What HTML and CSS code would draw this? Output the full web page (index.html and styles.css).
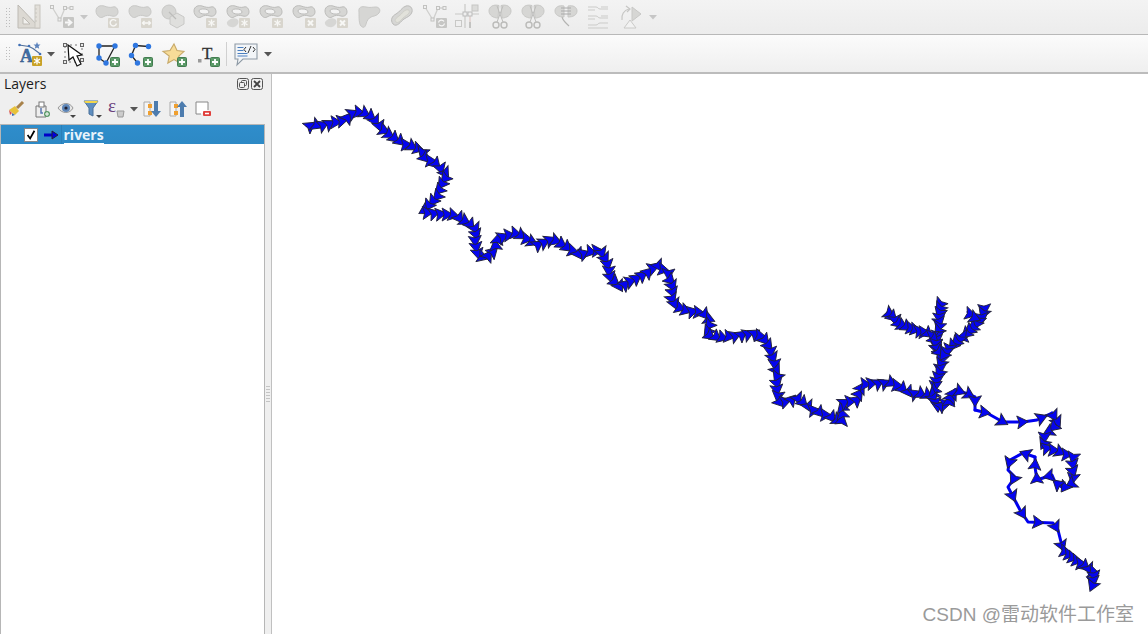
FILE: index.html
```html
<!DOCTYPE html>
<html lang="en">
<head>
<meta charset="utf-8">
<title>QGIS rivers</title>
<link rel="stylesheet" href="styles.css">
</head>
<body>
<svg class="defs" width="0" height="0" aria-hidden="true">
  <defs>
    <symbol id="blob" viewBox="0 0 24 26"><path d="M1 7C1 2 6 1 9 2s6 2 9 1 5 2 5 5-3 5-6 4-6-1-9 1-7-2-7-6z" fill="#d6d6d4" stroke="#c8c8c6"/></symbol>
    <symbol id="ring" viewBox="0 0 24 26"><path d="M1 7C1 2 6 1 9 2s6 2 9 1 5 2 5 5-3 5-6 4-6-1-9 1-7-2-7-6z" fill="#d6d6d4" stroke="#bcbcba"/><path d="M6 7c0-2 3-2 5-2s5 1 5 3-3 2-5 2-5-1-5-3z" fill="#f3f3f3" stroke="#bcbcba"/></symbol>
    <symbol id="lobe" viewBox="0 0 24 26"><path d="M1 18c2-3 7-5 10-3s1 7-3 8-8-2-7-5z" fill="#d6d6d4"/></symbol>
    <symbol id="badge-gear" viewBox="0 0 24 26"><rect x="13" y="14" width="11" height="10" rx="1" fill="#d8d5cd"/><path d="M18.500 15.500v7M15.500 17l6 4M21.500 17l-6 4" stroke="#f7f7f5" stroke-width="1.300"/></symbol>
    <symbol id="badge-x" viewBox="0 0 24 26"><rect x="13" y="14" width="11" height="10" rx="1" fill="#d8d5cd"/><path d="M16 16.500l5 5M21 16.500l-5 5" stroke="#f7f7f5" stroke-width="2"/></symbol>
    <symbol id="nodes" viewBox="0 0 24 26"><path d="M2 3l8 13 5-12h7" fill="none" stroke="#d0d0ce" stroke-width="1.300"/><g fill="#efefef" stroke="#c2c2c0"><rect x=".5" y="1.500" width="3" height="3"/><rect x="13.500" y="2.500" width="3" height="3"/><rect x="20" y="2.500" width="3" height="3"/><rect x="8" y="14" width="3" height="3"/></g></symbol>
    <symbol id="scissor" viewBox="0 0 24 26"><path d="M11 1.500C5 0 1 3 1 7s4 7 9 7zM13 1.500C19 0 23 3 23 7s-4 7-9 7z" fill="#d6d6d4" stroke="#c8c8c6"/><path d="M9 2l6 16M15 2L9 18" stroke="#bdbdbb"/><circle cx="8" cy="21" r="3" fill="none" stroke="#bbbbb9" stroke-width="1.400"/><circle cx="16" cy="21" r="3" fill="none" stroke="#bbbbb9" stroke-width="1.400"/></symbol>
    <symbol id="plus" viewBox="0 0 10 10"><rect x=".5" y=".5" width="9" height="9" rx="1" fill="#5b9a68" stroke="#437d50"/><path d="M5 2v6M2 5h6" stroke="#fff" stroke-width="1.800"/></symbol>
    <symbol id="caret" viewBox="0 0 10 6"><path d="M1 1h8L5 5.500z"/></symbol>
  </defs>
</svg>

<div class="toolbar toolbar-top">
  <span class="grip grip-top"></span>
  <span class="btn btn-ruler"><svg viewBox="0 0 24 26"><path d="M1 1v23h22z" fill="#dcd9d3" stroke="#bdbab4"/><path d="M6 13v7h7z" fill="#f1f0ed" stroke="#bdbab4"/><rect x="18" y="1" width="5" height="23" fill="#e3e0da" stroke="#c8c5bf"/><path d="M18 5h2M18 9h2M18 13h2M18 17h2" stroke="#c8c5bf"/></svg></span>
  <span class="btn btn-tight"><svg viewBox="0 0 24 26"><use href="#nodes"/><rect x="13" y="13" width="11" height="11" rx="1" fill="#c6c6c4"/><path d="M15 18.500h5M18 15.500l3.500 3-3.500 3" fill="none" stroke="#f7f7f7" stroke-width="1.800"/></svg></span>
  <span class="caret-btn caret-gap"><svg class="caret caret-off"><use href="#caret"/></svg></span>
  <span class="btn"><svg viewBox="0 0 24 26"><use href="#blob"/><rect x="13" y="14" width="11" height="10" rx="1" fill="#d8d5cd"/><path d="M21 17a3.200 3.200 0 1 0 .5 2.500" fill="none" stroke="#f7f7f5" stroke-width="1.400"/></svg></span>
  <span class="btn"><svg viewBox="0 0 24 26"><use href="#blob"/><rect x="13" y="14" width="11" height="10" rx="1" fill="#d8d5cd"/><path d="M14.500 19h8M16.500 17l-2 2 2 2M20.500 17l2 2-2 2" fill="none" stroke="#f7f7f5" stroke-width="1.300"/></svg></span>
  <span class="btn"><svg viewBox="0 0 24 26"><circle cx="8" cy="8" r="7" fill="#d6d6d4" stroke="#c8c8c6"/><path d="M16 9l7 4v7l-7 4-7-4v-7z" fill="#dfdfdd" stroke="#c8c8c6"/><path d="M8 8l7 7" stroke="#bcbcba" stroke-width="1.200"/></svg></span>
  <span class="btn"><svg viewBox="0 0 24 26"><use href="#ring"/><use href="#badge-gear"/></svg></span>
  <span class="btn"><svg viewBox="0 0 24 26"><use href="#ring"/><use href="#lobe"/><use href="#badge-gear"/></svg></span>
  <span class="btn"><svg viewBox="0 0 24 26"><use href="#ring"/><use href="#badge-gear"/></svg></span>
  <span class="btn"><svg viewBox="0 0 24 26"><use href="#ring"/><use href="#badge-x"/></svg></span>
  <span class="btn"><svg viewBox="0 0 24 26"><use href="#ring"/><use href="#lobe"/><use href="#badge-x"/></svg></span>
  <span class="btn"><svg viewBox="0 0 24 26"><path d="M2 8C1 3 5 2 9 3s7 0 10 0 5 3 3 6-6 3-8 4-4 3-5 7-3 4-5 2-2-8-2-14z" fill="#d6d6d4" stroke="#c8c8c6"/></svg></span>
  <span class="btn"><svg viewBox="0 0 24 26"><path d="M3 20C0 16 2 12 6 10s6-7 10-8 7 2 6 6-5 5-8 7-7 9-11 5z" fill="#d6d6d4" stroke="#bcbcba"/><path d="M6 18c-2-2 0-4 3-6s4-5 7-6 4 1 3 3-4 3-6 5-5 6-7 4z" fill="#e2e2db" stroke="#cfcfc8"/></svg></span>
  <span class="btn"><svg viewBox="0 0 24 26"><use href="#nodes"/><rect x="13" y="14" width="11" height="10" rx="1" fill="#c6c6c4"/><path d="M15.500 18.500a3 3 0 0 1 5.500-1M21.500 19.500a3 3 0 0 1-5.500 1" fill="none" stroke="#f7f7f7" stroke-width="1.300"/></svg></span>
  <span class="btn"><svg viewBox="0 0 24 26"><path d="M10 0v24M0 10h24" stroke="#c8c8c6" stroke-width="1.200"/><path d="M15 10v8" stroke="#dcc8c4" stroke-width="1.200"/><path d="M15 18v6" stroke="#b4b4b2" stroke-width="1.500"/><rect x="17" y="1" width="6" height="6" fill="#dcdcda" stroke="#c6c6c4"/><rect x="8" y="8" width="4" height="4" fill="#efefef" stroke="#bbb"/><rect x="13" y="8" width="4" height="4" fill="#efefef" stroke="#bbb"/><rect x=".5" y="16.500" width="6" height="6" fill="#efefef" stroke="#c8c8c6"/></svg></span>
  <span class="btn"><svg viewBox="0 0 24 26"><use href="#scissor"/></svg></span>
  <span class="btn"><svg viewBox="0 0 24 26"><use href="#scissor"/></svg></span>
  <span class="btn"><svg viewBox="0 0 24 26"><path d="M10 2C5 1 1 3 1 7s4 6 9 6zM14 2c5-1 9 1 9 5s-4 6-9 6z" fill="#d6d6d4" stroke="#c8c8c6"/><path d="M7 4h10M7 7h10M7 10h10" stroke="#aaa"/><path d="M8 13c1 4 4 6 7 9" fill="none" stroke="#b4b4b2" stroke-width="1.100"/></svg></span>
  <span class="btn"><svg viewBox="0 0 24 26"><path d="M2 3h8c2 0 2 2 4 2h8M2 6h7M15 3h7M2 12h8c2 0 2 2 4 2h8M2 15h7M15 12h7M2 21h8c2 0 2-2 4-2h8M2 24h20" fill="none" stroke="#cbcbc9" stroke-width="1"/></svg></span>
  <span class="btn btn-tight"><svg viewBox="0 0 24 26"><path d="M10 5C5 6 2 11 3 16" fill="none" stroke="#c6c6c4" stroke-width="1.200"/><path d="M7 2l4 3-3 3" fill="none" stroke="#c6c6c4" stroke-width="1.200"/><path d="M13 3l9 7-9 7z" fill="#d6d6d4" stroke="#c8c8c6"/><path d="M11 16l-6 8h12z" fill="#f2f2f2" stroke="#cacac8"/></svg></span>
  <span class="caret-btn"><svg class="caret caret-off"><use href="#caret"/></svg></span>
</div>

<div class="toolbar toolbar-second">
  <span class="grip grip-short"></span>
  <span class="btn btn-tight"><svg viewBox="0 0 24 26"><path d="M1 4l10 1.500 4 2 8 6" fill="none" stroke="#4e6e9a" stroke-width="1.100"/><circle cx="1.500" cy="4" r="1.300" fill="#3f6fb5"/><circle cx="11" cy="5" r="1.300" fill="#3f6fb5"/><circle cx="22" cy="13" r="1.300" fill="#3f6fb5"/><path d="M19 1l1 2.400 2.500.2-1.900 1.700.6 2.500-2.200-1.400-2.200 1.400.6-2.500-1.900-1.700 2.500-.2z" fill="#5c83bd"/><text class="label-a" x="2" y="21">A</text><rect x="14" y="15" width="10" height="10" rx="1" fill="#c9a227"/><path d="M19 16.500v7M16 18l6 4M22 18l-6 4" stroke="#fff" stroke-width="1.300"/></svg></span>
  <span class="caret-btn caret-tight"><svg class="caret"><use href="#caret"/></svg></span>
  <span class="btn btn-draw"><svg viewBox="0 0 24 26"><rect x="3" y="4" width="17" height="17" fill="none" stroke="#777" stroke-dasharray="2 3"/><g fill="#e8e8e8" stroke="#666"><rect x="1.500" y="2.500" width="3" height="3"/><rect x="18.500" y="2.500" width="3" height="3"/><rect x="1.500" y="19.500" width="3" height="3"/><rect x="18.500" y="17.500" width="3" height="3"/></g><path d="M6 4l1 15 4-3 4 9 4-2-4-8 5-1z" fill="#fff" stroke="#111" stroke-width="1.200"/></svg></span>
  <span class="btn btn-draw"><svg viewBox="0 0 24 26"><path d="M3 5l16 0-9 17-7-5z" fill="none" stroke="#222" stroke-width="1.300"/><g fill="#2f77e0"><circle cx="3" cy="5" r="2.700"/><circle cx="19" cy="5" r="2.700"/><circle cx="10" cy="22" r="2.700"/><circle cx="3" cy="17" r="2.700"/></g><use href="#plus" x="14" y="16" width="10" height="10"/></svg></span>
  <span class="btn btn-draw"><svg viewBox="0 0 24 26"><path d="M19.500 5.500l-13-1-4 10 6 7.500" fill="none" stroke="#222" stroke-width="1.300"/><g fill="#2f77e0"><circle cx="6.500" cy="4.500" r="2.700"/><circle cx="19.500" cy="5.500" r="2.700"/><circle cx="2.500" cy="14.500" r="2.700"/><circle cx="8.500" cy="22" r="2.700"/></g><use href="#plus" x="14" y="16" width="10" height="10"/></svg></span>
  <span class="btn btn-draw"><svg viewBox="0 0 24 26"><path d="M11 3l3 6.500 7 .9-5.200 4.700 1.400 7-6.200-3.500-6.200 3.500 1.400-7L0 10.400l7-.9z" fill="#f7dc98" stroke="#c6a868" stroke-width="1.100"/><use href="#plus" x="14" y="16" width="10" height="10"/></svg></span>
  <span class="btn btn-last"><svg viewBox="0 0 24 26"><text class="label-t" x="6" y="18">T</text><rect x="2" y="18" width="3.500" height="3.500" fill="#9a9a9a"/><use href="#plus" x="14" y="16" width="10" height="10"/></svg></span>
  <span class="sep"></span>
  <span class="btn btn-tight"><svg viewBox="0 0 24 26"><path d="M1 3h22v15H9l-6 6 1-6H1z" fill="#f2f5f8" stroke="#8e9aa5" stroke-width="1.100"/><path d="M3.500 6.500h6M3.500 9.500h6M3.500 12.500h10M3.500 15h10" stroke="#4a7fc0" stroke-width="1.200"/><path d="M12 6l-2 2.500 2 2.500M19 6l2 2.500-2 2.500M17 5l-3 7" fill="none" stroke="#333" stroke-width="1"/></svg></span>
  <span class="caret-btn"><svg class="caret"><use href="#caret"/></svg></span>
</div>

<div class="workspace">
  <aside class="panel">
    <div class="panel-title">
      <span class="panel-name">Layers</span>
      <span class="title-btns">
        <svg class="title-btn" viewBox="0 0 12 12"><rect x=".5" y=".5" width="11" height="11" rx="2" fill="none" stroke="#555"/><rect x="4.500" y="2.500" width="5" height="5" rx="1" fill="none" stroke="#555"/><rect x="2.500" y="4.500" width="5" height="5" rx="1" fill="#efefef" stroke="#555"/></svg>
        <svg class="title-btn" viewBox="0 0 12 12"><rect x=".5" y=".5" width="11" height="11" rx="2" fill="none" stroke="#555"/><path d="M3 3l6 6M9 3l-6 6" stroke="#444" stroke-width="1.800"/></svg>
      </span>
    </div>
    <div class="panel-tools">
      <span class="tool"><svg viewBox="0 0 20 20"><path d="M3 11l6-4 4 5-4 4z" fill="#e7c23a"/><path d="M3 11l3 3-2 2z" fill="#d9534f"/><path d="M6 14l3 2-3 1z" fill="#3f6fb5"/><path d="M11 9l6-6" stroke="#a8824a" stroke-width="3"/></svg></span>
      <span class="tool"><svg viewBox="0 0 20 20"><path d="M4 7h10v11H4z" fill="#eee" stroke="#777"/><rect x="7" y="3" width="5" height="5" fill="#fff" stroke="#777"/><path d="M9 9v5h2" fill="none" stroke="#5a78b0" stroke-width="1.500"/><rect x="12" y="12" width="6" height="6" rx="3" fill="#5b9a68"/><path d="M15 13v4M13 15h4" stroke="#fff"/></svg></span>
      <span class="tool"><svg viewBox="0 0 20 20"><path d="M1 9c4-6 12-6 15 0-3 6-11 6-15 0z" fill="#e6e6e6" stroke="#999"/><circle cx="9" cy="9" r="4" fill="#5e86b8"/><circle cx="9" cy="9" r="1.600" fill="#223"/><path d="M13 16h6l-3 3z" fill="#444"/></svg></span>
      <span class="tool"><svg viewBox="0 0 20 20"><path d="M1 2h14l-5 7v8l-4-2V9z" fill="#5e8ec0" stroke="#4a7099"/><path d="M1 2h14l-1.500 2h-11z" fill="#f2d64b"/><path d="M13 16h6l-3 3z" fill="#444"/></svg></span>
      <span class="tool tool-expr"><svg viewBox="0 0 20 20"><text class="label-e" x="1" y="13">ε</text><path d="M10 12h7l-1 6h-5z" fill="#ccc" stroke="#999"/></svg></span>
      <span class="caret-btn caret-small"><svg class="caret"><use href="#caret"/></svg></span>
      <span class="tool"><svg viewBox="0 0 20 20"><path d="M2 3h6v14H2z" fill="#f5f5f5" stroke="#aaa"/><rect x="6" y="5" width="4" height="4" fill="#f0a030"/><rect x="6" y="12" width="4" height="4" fill="#f0a030"/><path d="M14 2v12" stroke="#4d7cae" stroke-width="4"/><path d="M9 12h10l-5 6z" fill="#4d7cae"/></svg></span>
      <span class="tool"><svg viewBox="0 0 20 20"><path d="M2 3h6v14H2z" fill="#f5f5f5" stroke="#aaa"/><rect x="6" y="5" width="4" height="4" fill="#f0a030"/><rect x="6" y="12" width="4" height="4" fill="#f0a030"/><path d="M14 18V7" stroke="#4d7cae" stroke-width="4"/><path d="M9 8h10l-5-6z" fill="#4d7cae"/></svg></span>
      <span class="tool"><svg viewBox="0 0 20 20"><path d="M8 15H3V3h12v8" fill="#fff" stroke="#888"/><rect x="10" y="12" width="8" height="5" rx="1" fill="#e0403c"/><path d="M12 14.500h4" stroke="#fff" stroke-width="1.500"/></svg></span>
    </div>
    <div class="tree">
      <div class="tree-row">
        <span class="check"><svg viewBox="0 0 14 14"><path d="M3 7l3 4 5-9" fill="none" stroke="#000" stroke-width="2"/></svg></span>
        <svg class="legend" viewBox="0 0 16 10"><path d="M1 5h9" stroke="#0000c8" stroke-width="3"/><path d="M9 1l6 4-6 4z" fill="#0000e0" stroke="#223"/></svg>
        <span class="row-rule"></span>
        <span class="layer-name">rivers</span>
      </div>
    </div>
  </aside>
  <div class="splitter"><span class="split-dots"></span></div>
  <main class="canvas">
    <svg id="map" class="map" viewBox="272 74 876 560"></svg>
    <div class="watermark">CSDN @雷动软件工作室</div>
  </main>
</div>
<script src="script.js"></script>
</body>
</html>
```
FILE: styles.css
```css
* { box-sizing: border-box; }
html, body { margin: 0; height: 100%; overflow: hidden; }
body {
  width: 1148px;
  height: 634px;
  display: flex;
  flex-direction: column;
  background: #efefef;
  font-family: "Open Sans", "Noto Sans", sans-serif;
  color: #1c1c1c;
}
.defs { position: absolute; }
.toolbar { display: flex; align-items: center; flex: none; }
.toolbar-top {
  height: 35px;
  padding-left: 5px;
  background: linear-gradient(#f3f3f3, #ececec);
  border-bottom: 1px solid #b8b8b8;
}
.toolbar-second {
  height: 39px;
  padding-left: 5px;
  background: linear-gradient(#fbfbfb, #efefef);
  border-bottom: 2px solid #bcbcbc;
}
.grip {
  width: 5px;
  height: 20px;
  margin-right: 8px;
  background-image: radial-gradient(circle, #bdbdbd 0.8px, transparent 1px);
  background-size: 3px 3px;
  flex: none;
}
.grip-top { margin-right: 6.5px; }
.grip-short { height: 16px; }
.btn { width: 24px; height: 26px; margin-right: 8.77px; display: flex; flex: none; }
.btn svg { width: 24px; height: 26px; overflow: visible; }
.btn-ruler { margin-right: 9.5px; }
.btn-tight { margin-right: 0; }
.btn-draw { margin-right: 9.5px; }
.btn-last { margin-right: 6px; }
.caret-btn { width: 10px; margin-left: 5px; display: flex; justify-content: center; flex: none; }
.caret { width: 10px; height: 6px; fill: #555; }
.caret-off { fill: #c6c6c6; }
.caret-gap { margin-right: 6px; }
.caret-tight { margin-left: 4px; margin-right: 6px; }
.caret-small { margin-left: 1px; margin-right: 1px; }
.sep { width: 1px; height: 24px; margin-right: 7px; background: #d0d0d0; flex: none; }
.label-a { font: bold 18px "Liberation Serif", serif; fill: #3f6fa8; stroke: #2a4d78; stroke-width: .4; }
.label-t { font: 17px "Liberation Serif", serif; fill: #333; stroke: #333; stroke-width: .3; }
.label-e { font: 19px "Liberation Serif", serif; fill: #6a3f7d; }

.workspace { flex: 1; display: flex; min-height: 0; }
.panel { width: 265px; display: flex; flex-direction: column; flex: none; }
.panel-title { height: 20px; display: flex; align-items: center; justify-content: space-between; padding: 0 2px 0 4px; flex: none; }
.panel-name { font-size: 14px; line-height: 20px; }
.title-btns { display: flex; gap: 2px; }
.title-btn { width: 12px; height: 12px; }
.panel-tools { height: 30px; display: flex; align-items: center; padding: 0 0 1px 3.5px; flex: none; }
.tool { width: 25.5px; height: 20px; display: flex; justify-content: center; flex: none; }
.tool svg { width: 20px; height: 20px; overflow: visible; }
.tool-expr { width: 22px; }
.tree { flex: 1; background: #fff; border: 1px solid #b6b6b6; border-bottom: 0; }
.tree-row {
  height: 19px;
  background: linear-gradient(#2f8dcb, #2d89c5);
  display: flex;
  align-items: center;
  padding-left: 23px;
}
.check {
  width: 14px;
  height: 14px;
  background: #fff;
  border: 1px solid #888;
  display: flex;
  flex: none;
}
.check svg { width: 12px; height: 12px; }
.legend { width: 16px; height: 10px; margin-left: 5px; flex: none; }
.row-rule { width: 1px; height: 19px; margin-left: 2px; background: #2a7fb8; flex: none; }
.layer-name {
  margin-left: 1.5px;
  font-size: 14px;
  font-weight: 700;
  color: #e8f3fb;
  line-height: 17px;
  border-bottom: 1px solid #fff;
}
.splitter { width: 6px; display: flex; align-items: center; justify-content: center; flex: none; }
.split-dots {
  width: 4px;
  height: 18px;
  margin-top: 80px;
  background-image: radial-gradient(circle, #c4c4c4 0.7px, transparent 1px);
  background-size: 2px 3px;
}
.canvas { flex: 1; position: relative; background: #fff; border-left: 1px solid #c0c0c0; min-width: 0; }
.map { position: absolute; left: 0; top: 0; width: 876px; height: 560px; }
.river-line { fill: none; stroke: #0000f0; stroke-width: 3; stroke-linejoin: round; stroke-linecap: round; }
.river-mark { fill: #0505f0; stroke: #23233a; stroke-width: .9; stroke-linejoin: miter; }
.watermark {
  position: absolute;
  right: 14px;
  bottom: 7px;
  font: 19px/24px "Liberation Sans", "Noto Sans CJK SC", sans-serif;
  color: #9a9a9a;
  white-space: nowrap;
}
```
FILE: script.js
```js
// River polylines: [[x, y], ...] in page coordinates, with marker spacing s.
var rivers = [
  { s: 6.5, p: [[307,126],[323,125],[333,123],[345,120],[353,113],[362,112],[372,117],[380,127],[392,137],[407,145],[422,150],[423,157],[435,163],[447,175],[440,187],[437,197],[427,207],[423,212],[440,214],[453,215],[467,222],[477,230],[475,242],[478,255],[485,258],[493,252],[498,238],[517,233],[537,245],[553,239],[563,245],[580,255],[590,252],[600,250],[607,262],[610,277],[620,287],[633,280],[647,273],[657,265],[668,273],[673,288],[672,302],[683,310],[703,313],[710,320],[707,335],[720,338],[740,335],[757,333],[767,342],[773,358],[777,373],[777,393],[780,403],[797,398],[813,410],[833,418],[842,422],[842,403],[857,400],[862,385],[873,383],[893,383],[910,393],[928,395]] },
  { s: 4.5, p: [[940,302],[939,327],[935,347],[942,355],[940,370],[935,387],[932,397],[938,407],[948,403],[955,390]] },
  { s: 10, p: [[955,390],[965,393],[975,397],[975,410]] },
  { s: 20, p: [[975,410],[987,413],[1003,422],[1023,422],[1037,420],[1052,413]] },
  { s: 7, p: [[1052,413],[1058,423],[1045,435],[1043,447],[1060,452],[1073,457],[1073,470],[1073,483],[1063,488]] },
  { s: 14, p: [[1063,488],[1055,482],[1052,475],[1037,480],[1035,467],[1035,457]] },
  { s: 20, p: [[1035,457],[1023,453],[1010,460],[1008,470],[1015,477],[1008,487],[1020,510],[1028,522],[1053,523],[1058,530],[1063,550]] },
  { s: 5, p: [[1063,550],[1080,563],[1095,573],[1092,587]] },
  { s: 4.5, p: [[888,312],[900,325],[917,330],[932,335],[940,353]] },
  { s: 4.5, p: [[985,307],[982,318],[967,333],[950,348],[942,357]] },
  { s: 6, p: [[968,312],[975,318]] }
];

var NS = "http://www.w3.org/2000/svg";
var map = document.getElementById("map");
var seed = 7;

function rand() {
  seed = (seed * 16807) % 2147483647;
  return seed / 2147483647;
}

function add(name, cls, attrs) {
  var el = document.createElementNS(NS, name);
  el.setAttribute("class", cls);
  for (var k in attrs) el.setAttribute(k, attrs[k]);
  map.appendChild(el);
}

rivers.forEach(function (r) {
  add("polyline", "river-line", { points: r.p.map(function (q) { return q[0] + "," + q[1]; }).join(" ") });
});

rivers.forEach(function (r) {
  var left = r.s / 2;
  var jitter = r.s < 10 ? 32 : 8;
  for (var i = 0; i < r.p.length - 1; i++) {
    var a = r.p[i], b = r.p[i + 1];
    var len = Math.hypot(b[0] - a[0], b[1] - a[1]);
    var ang = Math.atan2(b[1] - a[1], b[0] - a[0]) * 180 / Math.PI;
    var at = left;
    while (at < len) {
      var x = a[0] + (b[0] - a[0]) * at / len;
      var y = a[1] + (b[1] - a[1]) * at / len;
      var t = ang + (rand() - 0.5) * 2 * jitter;
      add("path", "river-mark", {
        d: "M6 0L-5 -6.500L-3 0L-5 6.500Z",
        transform: "translate(" + x.toFixed(1) + " " + y.toFixed(1) + ") rotate(" + t.toFixed(1) + ")"
      });
      at += r.s;
    }
    left = at - len;
  }
});
```
